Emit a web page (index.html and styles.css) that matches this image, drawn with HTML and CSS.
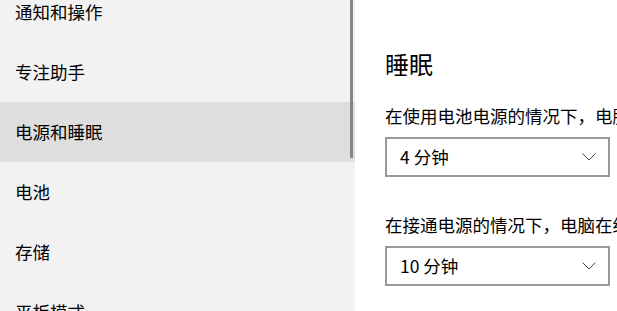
FILE: index.html
```html
<!DOCTYPE html>
<html lang="zh-CN">
<head>
<meta charset="utf-8">
<link rel="stylesheet" href="styles.css">
</head>
<body>
<div class="app">
  <nav class="sidebar">
    <ul class="nav-list">
      <li class="nav-item">通知和操作</li>
      <li class="nav-item">专注助手</li>
      <li class="nav-item selected">电源和睡眠</li>
      <li class="nav-item">电池</li>
      <li class="nav-item">存储</li>
      <li class="nav-item">平板模式</li>
    </ul>
    <div class="scroll-thumb"></div>
  </nav>
  <main class="content">
    <h2 class="section-title">睡眠</h2>
    <p class="field-label">在使用电池电源的情况下，电脑在经过以下时间后进入睡眠状态</p>
    <div class="select">
      <span class="select-value">4 分钟</span>
      <svg class="chevron" width="14" height="8" viewBox="0 0 14 8"><path d="M0.5 0.5 L7 7 L13.5 0.5" fill="none" stroke="#444" stroke-width="1"/></svg>
    </div>
    <p class="field-label second">在接通电源的情况下，电脑在经过以下时间后进入睡眠状态</p>
    <div class="select">
      <span class="select-value">10 分钟</span>
      <svg class="chevron" width="14" height="8" viewBox="0 0 14 8"><path d="M0.5 0.5 L7 7 L13.5 0.5" fill="none" stroke="#444" stroke-width="1"/></svg>
    </div>
  </main>
</div>
</body>
</html>
```
FILE: styles.css
```css
html, body {
  margin: 0;
  padding: 0;
  height: 100%;
  overflow: hidden;
}
body {
  font-family: "Noto Sans CJK SC", "Liberation Sans", sans-serif;
  color: #000;
  background: #fff;
}
.app {
  display: flex;
  height: 311px;
  overflow: hidden;
}
.sidebar {
  position: relative;
  width: 355px;
  flex: none;
  background: #f2f2f2;
  overflow: hidden;
}
.nav-list {
  list-style: none;
  margin: -18px 0 0 0;
  padding: 0;
}
.nav-item {
  height: 60px;
  display: flex;
  align-items: center;
  padding-left: 15px;
  font-size: 17.5px;
  line-height: 24px;
}
.nav-item.selected {
  background: #dedede;
}
.scroll-thumb {
  position: absolute;
  top: 0;
  left: 350px;
  width: 3px;
  height: 158px;
  background: #868686;
}
.content {
  flex: 1;
  padding: 48px 0 0 30px;
  overflow: hidden;
  white-space: nowrap;
}
.section-title {
  margin: 0;
  font-size: 24px;
  line-height: 32px;
  font-weight: 400;
}
.field-label {
  margin: 24px 0 0 0;
  font-size: 17.5px;
  line-height: 24px;
}
.field-label.second {
  margin-top: 36px;
}
.select {
  box-sizing: border-box;
  margin-top: 9px;
  width: 225px;
  height: 40px;
  border: 2px solid #999;
  background: #fff;
  display: flex;
  align-items: center;
  justify-content: space-between;
  padding: 0 12px 0 13px;
}
.select-value {
  font-size: 17.5px;
  line-height: 24px;
}
.chevron {
  display: block;
}
```
